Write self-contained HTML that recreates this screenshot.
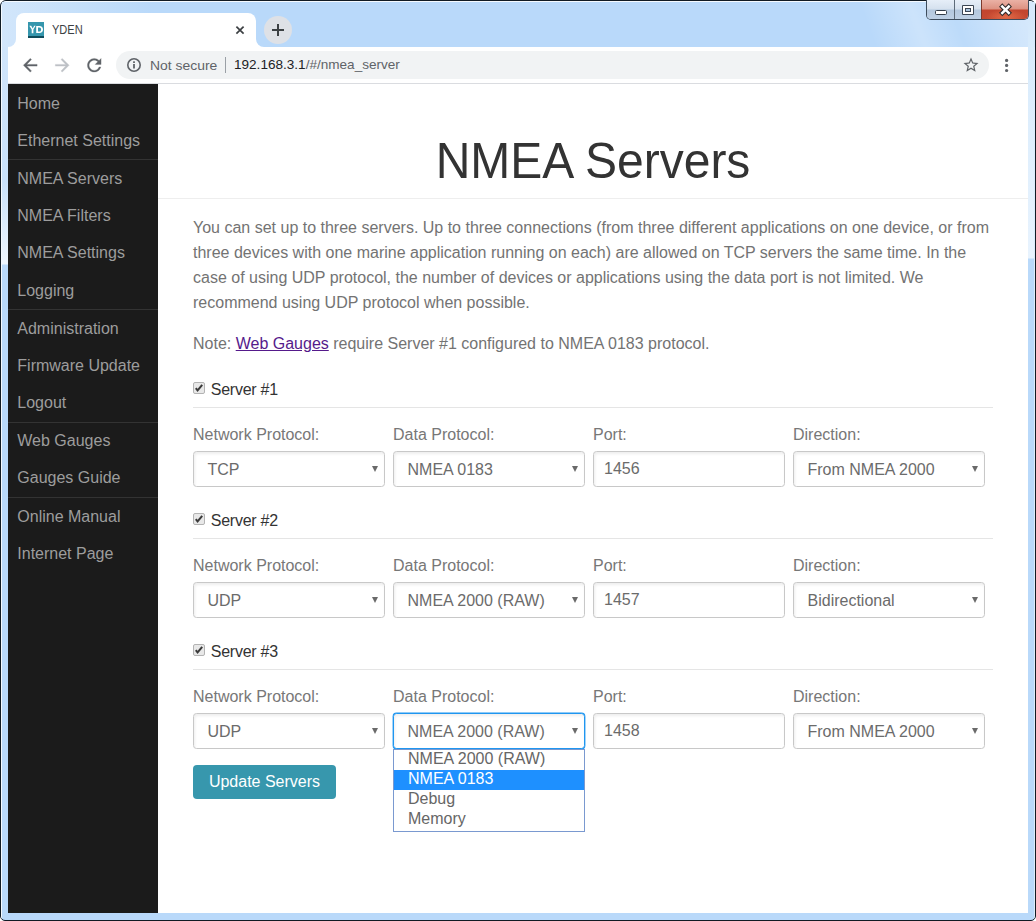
<!DOCTYPE html>
<html><head><meta charset="utf-8">
<style>
*{box-sizing:border-box;margin:0;padding:0}
html,body{width:1036px;height:921px;overflow:hidden;background:#fff}
body{font-family:"Liberation Sans",sans-serif;position:relative}
.abs{position:absolute}
#frame{position:absolute;left:0;top:0;width:1036px;height:921px;background:#b9d9fa;border:1px solid #111b24;border-radius:6px 6px 5px 5px;overflow:hidden}
#frame .fhl{position:absolute;left:0;top:0;right:0;bottom:0;border-top:1px solid rgba(255,255,255,.85);border-left:1px solid rgba(255,255,255,.85);border-right:1px solid rgba(255,255,255,.5);border-radius:5px 5px 0 0}
#tbar{position:absolute;left:2px;top:2px;width:1033px;height:45px;background:linear-gradient(to right,#d2e6fb 0px,#c8e1fa 60px,#b9d9fa 150px,#b9d9fa 1034px)}
#tglow{position:absolute;left:800px;top:2px;width:235px;height:45px;background:linear-gradient(70deg,rgba(255,255,255,0) 0%,rgba(255,255,255,0) 30%,rgba(255,255,255,.28) 50%,rgba(255,255,255,.05) 66%,rgba(255,255,255,.3) 85%,rgba(255,255,255,.45) 100%)}
#lstrip{position:absolute;left:2px;top:47px;width:6px;height:866px;background:linear-gradient(to bottom,#d0e5fb 0,#c9e1fa 133px,#eef6fe 217px,#b9d9fa 218px,#b9d9fa 100%)}
#rstrip{position:absolute;left:1028px;top:20px;width:6px;height:893px;background:linear-gradient(to bottom,#d4e8fc 0,#d8ebfc 27px,#e8f3fe 238px,#b9d9fa 239px,#b9d9fa 100%)}
#caps{position:absolute;left:926px;top:0;width:103px;height:20px;border:1px solid #3d4c5c;border-top:none;border-radius:0 0 5px 5px;overflow:hidden}
#caps .b{position:absolute;top:0;height:19px}
.bmin{left:0;width:27px;background:linear-gradient(to bottom,#e6eef8 0,#d5e1ee 9px,#b4c8de 10px,#bed0e4 19px)}
.bmax{left:28px;width:26px;background:linear-gradient(to bottom,#e6eef8 0,#d5e1ee 9px,#b4c8de 10px,#bed0e4 19px)}
.bcls{left:55px;width:48px;background:radial-gradient(ellipse 20px 8px at 24px 17px,rgba(240,120,80,.7),rgba(240,120,80,0)),linear-gradient(to bottom,#eab1a5 0,#dd9282 9px,#c2452e 10px,#c54a32 19px)}
.bsep{position:absolute;top:0;width:1px;height:19px;background:#51606e}
#tab{position:absolute;left:16px;top:13px;width:240px;height:34px;background:#fff;border-radius:8px 8px 0 0}
#tabl,#tabr{position:absolute;top:39px;width:8px;height:8px;background:#fff}
#tabl{left:8px}#tabl:after{background:#d0e5fb!important}#tabr{left:256px}
#tabl:after,#tabr:after{content:"";position:absolute;left:0;top:0;width:8px;height:8px;background:#b9d9fa}
#tabl:after{border-radius:0 0 8px 0}
#tabr:after{border-radius:0 0 0 8px}
#toolbar{position:absolute;left:8px;top:47px;width:1020px;height:37px;background:#fff;border-bottom:1px solid #dadce0}
#omni{position:absolute;left:116px;top:51px;width:873px;height:28px;border-radius:14px;background:#f1f3f4}
#content{position:absolute;left:8px;top:84px;width:1020px;height:829px;background:#fff}
#side{position:absolute;left:8px;top:84px;width:150px;height:829px;background:#1b1b1b}
.nav{position:absolute;left:17.3px;font-size:16px;color:#9d9d9d;line-height:18px;white-space:nowrap}
.div{position:absolute;left:8px;width:150px;height:1px;background:#333}
h1{position:absolute;left:158px;width:870px;text-align:center;font-weight:normal;font-size:48px;color:#333;line-height:56px;top:134px;transform:scaleY(1.06);transform-origin:50% 44px}
.hr{position:absolute;height:1px;background:#eee}
.p{position:absolute;left:193px;width:800px;font-size:16px;color:#737373;line-height:25px}
.lbl{position:absolute;font-size:16px;color:#777;line-height:18px;white-space:nowrap}
.sel{position:absolute;width:192px;height:36px;border:1px solid #c8c8c8;border-radius:3.5px;background:#fff;box-shadow:inset 1px 2px 3px rgba(0,0,0,.07)}
.sel span{position:absolute;left:13.5px;top:9px;font-size:16px;line-height:18px;color:#6b6b6b;white-space:nowrap}
.sel i{position:absolute;right:6px;top:14px;width:0;height:0;border-left:3.5px solid transparent;border-right:3.5px solid transparent;border-top:6px solid #6a6a6a}
.inp span{left:10px;top:8px}
.chk{position:absolute;left:193px;width:12px;height:12px;border:1px solid #b3b3b3;border-radius:2px;background:#e8e8e8}
.srv{position:absolute;left:210.8px;font-size:16px;color:#333;line-height:18px;letter-spacing:-.25px}
.sec{position:absolute;left:0;width:1036px;height:110px}
.sec .chk,.sec .srv,.sec .lbl,.sec .sel,.sec .hr{position:absolute}
.foc{border-color:#1f96f0;box-shadow:inset 1px 2px 3px rgba(0,0,0,.07),0 0 0 .4px #1f96f0}
#btn{position:absolute;left:193px;top:765px;width:143px;height:34px;background:#3797ad;border-radius:4px;color:#fff;font-size:16px;line-height:18px;padding-top:8px;text-align:center}
#dd{position:absolute;left:393px;top:749px;width:192px;height:83px;border:1px solid #7a99d0;background:#fff}
.opt{position:absolute;left:0;width:190px;height:20px;padding-left:14px;font-size:16px;line-height:18px;color:#666;white-space:nowrap}
.hl{background:#1e90ff;color:#fff}
</style></head><body>
<div id="frame"><div class="fhl"></div></div>
<div id="tbar"></div><div id="tglow"></div><div id="lstrip"></div><div id="rstrip"></div>
<div id="caps"><div class="b bmin"></div><div class="bsep" style="left:27px;background:#5d6b79"></div><div class="b bmax"></div><div class="bsep" style="left:54px;background:#7d3a2c"></div><div class="b bcls"></div>
<svg style="position:absolute;left:-1px;top:0" width="103" height="20"><rect x="9.5" y="10.5" width="11" height="4" rx="1" fill="#fff" stroke="#333d48" stroke-width="1"/><rect x="36" y="5" width="12" height="10" rx="1" fill="#3b4654"/><rect x="37" y="6" width="10" height="8" fill="#fff"/><rect x="39" y="8" width="6" height="4" fill="#3b4654"/><rect x="40" y="9" width="4" height="2" fill="#a9c3dc"/><path d="M76.3 6.6L82.7 12.9M82.7 6.6L76.3 12.9" stroke="#2e2a2a" stroke-width="4.6" stroke-linecap="square"/><path d="M76.3 6.6L82.7 12.9M82.7 6.6L76.3 12.9" stroke="#fff" stroke-width="2.6" stroke-linecap="square"/></svg>
</div>
<div id="tab"></div><div id="tabl"></div><div id="tabr"></div>
<div id="toolbar"></div>
<div id="omni"></div>

<svg class="abs" style="left:28px;top:22px" width="16" height="16" viewBox="0 0 16 16"><rect width="16" height="16" fill="#3596ad"/><rect y="14" width="16" height="2" fill="#0e4c5c"/><path d="M1.3 3.7h1.9l1.5 2.7 1.5-2.7h1.4l-2.2 3.8v3.7H3.7V7.5z" fill="#fff"/><path fill-rule="evenodd" d="M8.2 4h3.3c2.2 0 3.5 1.4 3.5 3.45s-1.3 3.45-3.5 3.45H8.2zM10 5.4v4.1h1.3c1.2 0 1.8-.8 1.8-2.05s-.6-2.05-1.8-2.05z" fill="#fff"/></svg>
<div class="abs" style="left:52px;top:23px;font-size:12px;line-height:14px;color:#3c4043;white-space:nowrap;transform:scaleX(.92);transform-origin:0 0">YDEN</div>
<svg class="abs" style="left:235px;top:25px" width="10" height="10" viewBox="0 0 10 10"><path d="M1.4 1.6L8.6 8.6M8.6 1.6L1.4 8.6" stroke="#3c4043" stroke-width="1.7"/></svg>
<div class="abs" style="left:264px;top:16px;width:28px;height:28px;border-radius:14px;background:#dee1e6"></div>
<svg class="abs" style="left:271px;top:23px" width="14" height="14" viewBox="0 0 14 14"><path d="M7 1V13M1 7H13" stroke="#3c4043" stroke-width="2"/></svg>
<svg class="abs" style="left:20.2px;top:55px" width="20.5" height="20.5" viewBox="0 0 24 24"><path d="M20 11H7.83l5.59-5.59L12 4l-8 8 8 8 1.41-1.41L7.83 13H20v-2z" fill="#5f6368" stroke="#5f6368" stroke-width=".45"/></svg>
<svg class="abs" style="left:51.8px;top:55px" width="20.5" height="20.5" viewBox="0 0 24 24"><path d="M4 11h12.17l-5.59-5.59L12 4l8 8-8 8-1.41-1.41L16.17 13H4v-2z" fill="#bdc1c6" stroke="#bdc1c6" stroke-width=".45"/></svg>
<svg class="abs" style="left:84.1px;top:55px" width="20.5" height="20.5" viewBox="0 0 24 24"><path d="M17.65 6.35C16.2 4.9 14.21 4 12 4c-4.42 0-7.99 3.58-7.99 8s3.57 8 7.99 8c3.73 0 6.84-2.55 7.73-6h-2.08c-.82 2.33-3.04 4-5.65 4-3.31 0-6-2.690-6-6s2.69-6 6-6c1.66 0 3.14.69 4.22 1.78L13 11h7V4l-2.35 2.35z" fill="#5f6368" stroke="#5f6368" stroke-width=".3"/></svg>
<svg class="abs" style="left:126px;top:57px" width="16" height="16" viewBox="0 0 16 16"><circle cx="8" cy="8" r="6.2" stroke="#5f6368" stroke-width="1.6" fill="none"/><rect x="7.1" y="7" width="1.8" height="4.5" fill="#5f6368"/><rect x="7.1" y="4.3" width="1.8" height="1.7" fill="#5f6368"/></svg>
<div class="abs" style="left:149.6px;top:58px;font-size:13px;line-height:16px;color:#5f6368;white-space:nowrap;transform:scaleX(1.07);transform-origin:0 0">Not secure</div>
<div class="abs" style="left:225px;top:57px;width:1px;height:16px;background:#9aa0a6"></div>
<div class="abs" style="left:233.8px;top:57px;font-size:13px;line-height:16px;color:#5f6368;white-space:nowrap;transform:scaleX(1.043);transform-origin:0 0"><span style="color:#202124">192.168.3.1</span>/#/nmea_server</div>
<svg class="abs" style="left:962px;top:56px" width="18" height="18" viewBox="0 0 24 24"><path d="M22 9.24l-7.19-.62L12 2 9.19 8.63 2 9.24l5.46 4.73L5.82 21 12 17.27 18.18 21l-1.63-7.03L22 9.24zM12 15.4l-3.76 2.27 1-4.28-3.32-2.88 4.38-.38L12 6.1l1.71 4.04 4.38.38-3.32 2.88 1 4.28L12 15.4z" fill="#5f6368"/></svg>
<svg class="abs" style="left:1002px;top:57px" width="10" height="16" viewBox="0 0 10 16"><circle cx="4.6" cy="3.4" r="1.6" fill="#5f6368"/><circle cx="4.6" cy="8.4" r="1.6" fill="#5f6368"/><circle cx="4.6" cy="13.5" r="1.6" fill="#5f6368"/></svg>
<div id="content"></div>
<div id="side"></div>

<div class="nav" style="top:95px">Home</div>
<div class="nav" style="top:132px">Ethernet Settings</div>
<div class="div" style="top:159px"></div>
<div class="nav" style="top:170px">NMEA Servers</div>
<div class="nav" style="top:207px">NMEA Filters</div>
<div class="nav" style="top:244px">NMEA Settings</div>
<div class="nav" style="top:282px">Logging</div>
<div class="div" style="top:309px"></div>
<div class="nav" style="top:320px">Administration</div>
<div class="nav" style="top:357px">Firmware Update</div>
<div class="nav" style="top:394px">Logout</div>
<div class="div" style="top:422px"></div>
<div class="nav" style="top:432px">Web Gauges</div>
<div class="nav" style="top:469px">Gauges Guide</div>
<div class="div" style="top:497px"></div>
<div class="nav" style="top:508px">Online Manual</div>
<div class="nav" style="top:545px">Internet Page</div>

<h1>NMEA Servers</h1>
<div class="hr" style="left:158px;width:870px;top:198px"></div>
<div class="p" style="top:215px">You can set up to three servers. Up to three connections (from three different applications on one device, or from three devices with one marine application running on each) are allowed on TCP servers the same time. In the case of using UDP protocol, the number of devices or applications using the data port is not limited. We recommend using UDP protocol when possible.</div>
<div class="p" style="top:331px">Note: <a style="color:#551a8b;text-decoration:underline">Web Gauges</a> require Server #1 configured to NMEA 0183 protocol.</div>

<div class="sec" style="top:382px"><div class="chk" style="top:0"><svg width="12" height="12" style="position:absolute;left:-1px;top:-1px"><path d="M2.8 6.1 L4.6 8.5 L9.2 2.9" stroke="#3a3a3a" stroke-width="2" fill="none"/></svg></div><div class="srv" style="top:-1px">Server #1</div><div class="hr" style="left:193px;width:800px;top:25px;background:#e5e5e5"></div><div class="lbl" style="left:193px;top:44px">Network Protocol:</div><div class="lbl" style="left:393px;top:44px">Data Protocol:</div><div class="lbl" style="left:593px;top:44px">Port:</div><div class="lbl" style="left:793px;top:44px">Direction:</div><div class="sel" style="left:193px;top:69px"><span>TCP</span><i></i></div><div class="sel" style="left:393px;top:69px"><span>NMEA 0183</span><i></i></div><div class="sel inp" style="left:593px;top:69px"><span>1456</span></div><div class="sel" style="left:793px;top:69px"><span>From NMEA 2000</span><i></i></div></div>
<div class="sec" style="top:513px"><div class="chk" style="top:0"><svg width="12" height="12" style="position:absolute;left:-1px;top:-1px"><path d="M2.8 6.1 L4.6 8.5 L9.2 2.9" stroke="#3a3a3a" stroke-width="2" fill="none"/></svg></div><div class="srv" style="top:-1px">Server #2</div><div class="hr" style="left:193px;width:800px;top:25px;background:#e5e5e5"></div><div class="lbl" style="left:193px;top:44px">Network Protocol:</div><div class="lbl" style="left:393px;top:44px">Data Protocol:</div><div class="lbl" style="left:593px;top:44px">Port:</div><div class="lbl" style="left:793px;top:44px">Direction:</div><div class="sel" style="left:193px;top:69px"><span>UDP</span><i></i></div><div class="sel" style="left:393px;top:69px"><span>NMEA 2000 (RAW)</span><i></i></div><div class="sel inp" style="left:593px;top:69px"><span>1457</span></div><div class="sel" style="left:793px;top:69px"><span>Bidirectional</span><i></i></div></div>
<div class="sec" style="top:644px"><div class="chk" style="top:0"><svg width="12" height="12" style="position:absolute;left:-1px;top:-1px"><path d="M2.8 6.1 L4.6 8.5 L9.2 2.9" stroke="#3a3a3a" stroke-width="2" fill="none"/></svg></div><div class="srv" style="top:-1px">Server #3</div><div class="hr" style="left:193px;width:800px;top:25px;background:#e5e5e5"></div><div class="lbl" style="left:193px;top:44px">Network Protocol:</div><div class="lbl" style="left:393px;top:44px">Data Protocol:</div><div class="lbl" style="left:593px;top:44px">Port:</div><div class="lbl" style="left:793px;top:44px">Direction:</div><div class="sel" style="left:193px;top:69px"><span>UDP</span><i></i></div><div class="sel foc" style="left:393px;top:69px"><span>NMEA 2000 (RAW)</span><i></i></div><div class="sel inp" style="left:593px;top:69px"><span>1458</span></div><div class="sel" style="left:793px;top:69px"><span>From NMEA 2000</span><i></i></div></div>
<div id="btn">Update Servers</div>
<div id="dd"><div class="opt" style="top:0">NMEA 2000 (RAW)</div><div class="opt hl" style="top:20px">NMEA 0183</div><div class="opt" style="top:40px">Debug</div><div class="opt" style="top:60px">Memory</div></div>
</body></html>
